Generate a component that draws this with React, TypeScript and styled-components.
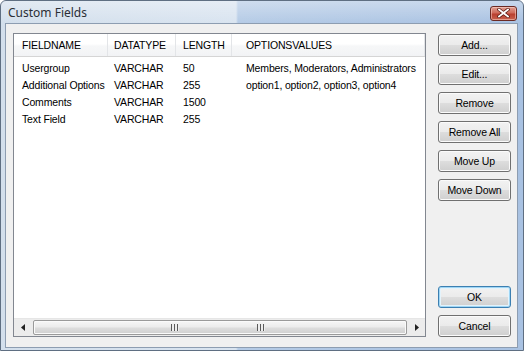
import styled, { createGlobalStyle, css } from "styled-components";

const GlobalStyle = createGlobalStyle`
  html, body {
    margin: 0;
    padding: 0;
    background: #ffffff;
  }
  body {
    font-family: "Liberation Sans", Arial, sans-serif;
    font-size: 10.5px;
    letter-spacing: -0.15px;
    color: #000;
  }
`;

const Window = styled.div`
  box-sizing: border-box;
  width: 524px;
  height: 351px;
  display: flex;
  flex-direction: column;
  border: 1px solid #5f6f82;
  border-radius: 6px 6px 0 0;
  background: linear-gradient(
    90deg,
    #d3dfec 0,
    #d9e4f0 235px,
    #b5cbe6 237px,
    #a9c2e2 100%
  );
  overflow: hidden;
`;

const TitleBar = styled.div`
  height: 22px;
  flex: none;
  display: flex;
  align-items: center;
  padding: 0 6px 0 7px;
  background: linear-gradient(rgba(255, 255, 255, 0.35), rgba(255, 255, 255, 0));
`;

const Title = styled.div`
  flex: 1;
  font-family: "Noto Sans", "Open Sans", sans-serif;
  font-size: 12px;
  letter-spacing: 0;
  color: #2b2f36;
  padding-top: 1px;
`;

const CloseButton = styled.div`
  box-sizing: border-box;
  width: 27px;
  height: 15px;
  margin-top: 2px;
  border: 1px solid #6b2a23;
  border-radius: 3px;
  background: linear-gradient(#e0a093 0%, #cf6a5a 45%, #b93f2f 55%, #c8614d 100%);
  box-shadow: inset 0 0 0 1px rgba(255, 220, 210, 0.5);
  display: flex;
  align-items: center;
  justify-content: center;
`;

const Client = styled.div`
  flex: 1;
  display: flex;
  margin: 0 5px 2px 4px;
  padding: 9px 6px 10px 7px;
  gap: 12px;
  border: 1px solid #8d9db1;
  background: #f0f0f0;
  min-height: 0;
`;

const ListView = styled.div`
  flex: 1;
  box-sizing: border-box;
  display: flex;
  flex-direction: column;
  border: 1px solid #828790;
  background: #ffffff;
`;

const COLUMNS = "94px 68px 56px 1fr";

const HeaderRow = styled.div`
  display: grid;
  grid-template-columns: ${COLUMNS};
  height: 22px;
  border-bottom: 1px solid #d5d5d5;
  background: linear-gradient(#ffffff 0%, #ffffff 45%, #f6f7f8 55%, #f2f3f5 100%);
`;

const HeaderCell = styled.div<{ $pad: number }>`
  display: flex;
  align-items: center;
  padding-left: ${(p) => p.$pad}px;
  border-right: 1px solid #e3e5e8;
  white-space: nowrap;
  overflow: hidden;
`;

const Rows = styled.div`
  flex: 1;
  padding-top: 2px;
`;

const Row = styled.div`
  display: grid;
  grid-template-columns: ${COLUMNS};
  height: 17px;
`;

const Cell = styled.div<{ $pad: number }>`
  display: flex;
  align-items: center;
  padding-left: ${(p) => p.$pad}px;
  white-space: nowrap;
`;

const ScrollBar = styled.div`
  height: 17px;
  display: flex;
  align-items: stretch;
  background: #ececec;
  border-top: 1px solid #e6e6e6;
`;

const ArrowButton = styled.div`
  width: 17px;
  flex: none;
  display: flex;
  align-items: center;
  justify-content: center;
`;

const Thumb = styled.div`
  flex: 1;
  margin: 1px 1px 1px 2px;
  box-sizing: border-box;
  border: 1px solid #9a9a9a;
  border-radius: 2px;
  background: linear-gradient(#f6f6f6 0%, #ececec 45%, #dcdcdc 55%, #d0d0d0 100%);
  box-shadow: inset 0 0 0 1px #fafafa;
  display: flex;
  align-items: center;
  padding-left: 137px;
  gap: 78px;
`;

const Grip = styled.div`
  width: 8px;
  height: 7px;
  background: repeating-linear-gradient(
    90deg,
    #5a5a5a 0,
    #5a5a5a 1px,
    #eeeeee 1px,
    #eeeeee 3px
  );
`;

const ButtonColumn = styled.div`
  width: 73px;
  flex: none;
  display: flex;
  flex-direction: column;
  gap: 7px;
  padding-top: 1px;
`;

const BottomGroup = styled.div`
  margin-top: auto;
  display: flex;
  flex-direction: column;
  gap: 7px;
`;

const Button = styled.div<{ $default?: boolean }>`
  box-sizing: border-box;
  height: 22px;
  display: flex;
  align-items: center;
  justify-content: center;
  border: 1px solid #707070;
  border-radius: 3px;
  background: linear-gradient(#f2f2f2 0%, #ebebeb 48%, #dddddd 52%, #cfcfcf 100%);
  box-shadow: inset 0 0 0 1px #fbfbfb;
  color: #000;
  ${(p) =>
    p.$default &&
    css`
      border-color: #3c7fb1;
      box-shadow: inset 0 0 0 1px #9fd6f5, inset 0 0 0 2px #e4f3fb;
    `}
`;

const columns = [
  { title: "FIELDNAME", pad: 8 },
  { title: "DATATYPE", pad: 6 },
  { title: "LENGTH", pad: 7 },
  { title: "OPTIONSVALUES", pad: 14 },
];

const fields = [
  ["Usergroup", "VARCHAR", "50", "Members, Moderators, Administrators"],
  ["Additional Options", "VARCHAR", "255", "option1, option2, option3, option4"],
  ["Comments", "VARCHAR", "1500", ""],
  ["Text Field", "VARCHAR", "255", ""],
];

const sideButtons = ["Add...", "Edit...", "Remove", "Remove All", "Move Up", "Move Down"];

const App = () => {
  return (
    <>
      <GlobalStyle />
      <Window>
        <TitleBar>
          <Title>Custom Fields</Title>
          <CloseButton>
            <svg width="13" height="10" viewBox="0 0 13 10">
              <path
                d="M2 1.5 L11 8.5 M11 1.5 L2 8.5"
                stroke="#5a1c14"
                strokeWidth="3.4"
                strokeLinecap="square"
              />
              <path
                d="M2 1.5 L11 8.5 M11 1.5 L2 8.5"
                stroke="#ffffff"
                strokeWidth="1.8"
                strokeLinecap="square"
              />
            </svg>
          </CloseButton>
        </TitleBar>
        <Client>
          <ListView>
            <HeaderRow>
              {columns.map((c) => (
                <HeaderCell key={c.title} $pad={c.pad}>
                  {c.title}
                </HeaderCell>
              ))}
            </HeaderRow>
            <Rows>
              {fields.map((row) => (
                <Row key={row[0]}>
                  {row.map((value, i) => (
                    <Cell key={i} $pad={columns[i].pad}>
                      {value}
                    </Cell>
                  ))}
                </Row>
              ))}
            </Rows>
            <ScrollBar>
              <ArrowButton>
                <svg width="4" height="7" viewBox="0 0 4 7">
                  <path d="M4 0 L0 3.5 L4 7 Z" fill="#222" />
                </svg>
              </ArrowButton>
              <Thumb>
                <Grip />
                <Grip />
              </Thumb>
              <ArrowButton>
                <svg width="4" height="7" viewBox="0 0 4 7">
                  <path d="M0 0 L4 3.5 L0 7 Z" fill="#222" />
                </svg>
              </ArrowButton>
            </ScrollBar>
          </ListView>
          <ButtonColumn>
            {sideButtons.map((label) => (
              <Button key={label}>{label}</Button>
            ))}
            <BottomGroup>
              <Button $default>OK</Button>
              <Button>Cancel</Button>
            </BottomGroup>
          </ButtonColumn>
        </Client>
      </Window>
    </>
  );
};

export default App;
